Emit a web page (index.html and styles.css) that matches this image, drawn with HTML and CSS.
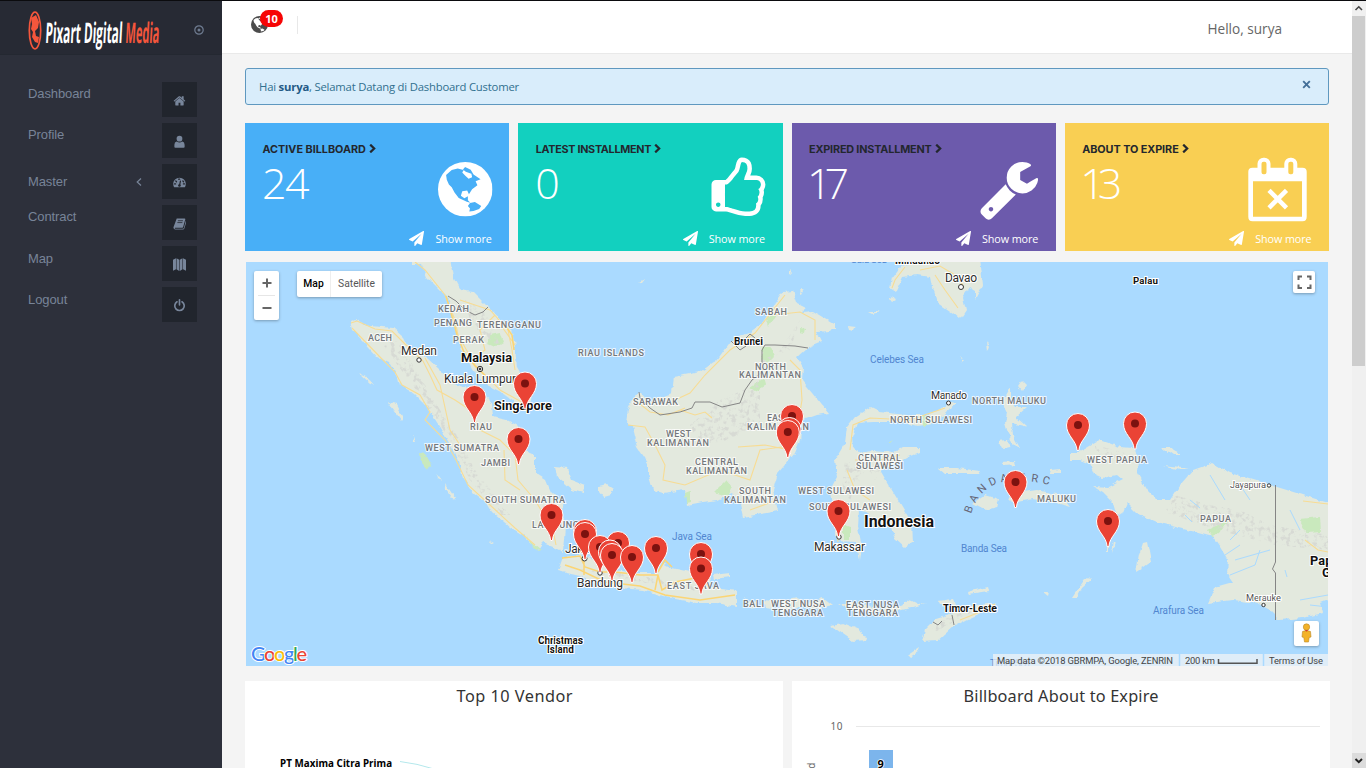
FILE: index.html
```html
<!DOCTYPE html>
<html lang="en">
<head>
<meta charset="utf-8">
<title>Pixart Digital Media</title>
<link rel="stylesheet" href="styles.css">
</head>
<body>
<svg class="defs" width="0" height="0">
  <defs>
    <symbol id="plane" viewBox="0 0 1792 1792"><path d="M1764 11q33 24 27 64l-256 1536q-5 29-32 45-14 8-31 8-11 0-24-5l-453-185-242 295q-18 23-49 23-13 0-22-4-19-7-30.500-23.500t-11.500-36.500v-349l864-1059-1069 925-395-162q-37-14-40-55-2-40 32-59l1664-960q15-9 32-9 20 0 36 11z"/></symbol>
    <symbol id="chev" viewBox="0 0 7 9"><path d="M1.200 .6 5.200 4.500 1.200 8.400" fill="none" stroke="currentColor" stroke-width="2.200"/></symbol>
    <g id="pin"><g transform="translate(13 13)">
      <path d="M-.9 25.500C-1.500 15-11.500 11-11.500 0a11.500 11.500 0 0 1 23 0C11.500 11 1.500 15 .9 25.500z" fill="#ea4335" stroke="#fff" stroke-width="1"/>
      <circle r="4" fill="#7b120f"/></g>
    </g>
    <symbol id="globe" viewBox="563 321 155 162" preserveAspectRatio="none">
      <ellipse cx="640.500" cy="402" rx="77.500" ry="81"/>
      <path class="sea" d="M588 374 586 360 602 345 619 340 636 345 632 352 640 361 650 371 660 366 658 356 642 350 634 343 640 336 656 344 664 358 684 372 670 378 675 390 660 402 651 417 646 406 632 408 628 421 638 429 648 423 648 435 655 442 645 439 622 428 610 412 602 396 594 388zM654 443 668 440 686 452 680 461 664 467 652 468 654 459 648 452z"/>
    </symbol>
  </defs>
</svg>
<div class="app">
  <aside class="sidebar">
    <div class="brand">
      <svg class="logo" width="140" height="44" viewBox="25 6 140 44">
        <ellipse cx="35" cy="29.500" rx="5.700" ry="18.300" fill="none" stroke="#f4563c" stroke-width="1.700"/>
        <path d="M31 17 36 14 39 21 38 27 35 30 36 35 39 36 38 42 35 41 32 36 33 31 31 28 32 23z" fill="#f4563c"/>
        <g transform="translate(45 41.500) skewX(-3)">
          <text class="logo-text" textLength="77" lengthAdjust="spacingAndGlyphs" fill="#fff">Pixart Digital</text>
          <text class="logo-text" x="80" textLength="34" lengthAdjust="spacingAndGlyphs" fill="#f4563c">Media</text>
        </g>
      </svg>
      <svg width="12" height="12" viewBox="0 0 12 12"><circle cx="6" cy="6" r="4.200" fill="none" stroke="#6f7c91" stroke-width="1.200"/><circle cx="6" cy="6" r="1.500" fill="#6f7c91"/></svg>
    </div>
    <ul class="menu">
      <li><span>Dashboard</span><i><svg viewBox="0 0 1792 1792"><path d="M1408 992v480q0 64-64 64h-384v-384h-256v384h-384q-64 0-64-64v-480l576-480zM1631 923l-83 85h-24l-692-577-692 577h-24l-83-85 4-45 719-599q76-50 152 0l244 204v-227h256v440l219 182z" transform="translate(60 40)"/></svg></i></li>
      <li><span>Profile</span><i><svg viewBox="0 0 14 14"><circle cx="7" cy="4" r="3.100"/><path d="M1.500 13V10.500q0-3 2.500-3.500Q7 9 10 7q2.500.5 2.500 3.500V13q0 .8-1 .8h-9q-1 0-1-.8z"/></svg></i></li>
      <li class="open"><span>Master</span><svg class="arrow" viewBox="0 0 6 8"><path d="M5 .5 1.200 4 5 7.500" fill="none" stroke="#788498" stroke-width="1.200"/></svg><i><svg viewBox="0 0 14 14"><path d="M.2 8.200a6.800 6.300 0 0 1 13.600 0q0 2.500-1.100 4H1.300Q.2 10.700.2 8.200z"/><path d="M7 10.500 8 5.500M3 5.400l.8.800M10.600 5.400l.8.800M1.600 8.500h1.200M11.200 8.500h1.200M6 3.400h1.200" stroke="#21252d" stroke-width="1.300" stroke-linecap="round"/><circle cx="6.900" cy="10.300" r="1.400" fill="#21252d"/></svg></i></li>
      <li><span>Contract</span><i><svg viewBox="0 0 14 14"><path d="M4 1.500h8.500q1 .2.700 1.200l-2.300 8q-.3 1-1.500 1H2.200q-.7.800.3 1h8.200q.8 0 1-.8l2.200-8q.7.500.4 1.400l-2.100 7.200q-.4 1-1.400 1H2.200Q.3 13 .5 11z"/><path d="M5.300 4h5.400M4.700 6h5.400" stroke="#21252d" stroke-width=".8"/></svg></i></li>
      <li><span>Map</span><i><svg viewBox="0 0 14 14"><path d="M0 2 3.200.3v11.900L0 13.800zM3.800.3 6.700 2v11.900l-2.900-1.700zM7.300 2l2.900-1.700v11.900l-2.900 1.700zM10.800.3 14 1.800v12l-3.200-1.600z"/></svg></i></li>
      <li><span>Logout</span><i><svg viewBox="0 0 14 14"><path d="M4.300 3a5.100 5.100 0 1 0 5.400 0M7 .9v5.400" fill="none" stroke="#78869b" stroke-width="1.800" stroke-linecap="round"/></svg></i></li>
    </ul>
  </aside>

  <main class="page">
    <header class="topbar">
      <div class="notify">
        <svg width="17" height="17"><use href="#globe"/></svg>
        <span class="badge">10</span>
      </div>
      <div class="hello">Hello, surya</div>
    </header>
    <div class="content">
      <div class="alert"><p>Hai <b>surya</b>, Selamat Datang di Dashboard Customer</p>
        <svg width="9" height="9" viewBox="0 0 9 9"><path d="M1.200 1.200 7.800 7.800M7.800 1.200 1.200 7.800" stroke="#436f98" stroke-width="1.900"/></svg></div>
      <section class="cards">
        <article class="card blue">
          <h3>ACTIVE BILLBOARD <svg><use href="#chev"/></svg></h3>
          <div class="value">24</div>
          <svg class="big" viewBox="0 0 60 66"><use href="#globe" x="2" y="6" width="54.500" height="54.500"/></svg>
          <a><svg><use href="#plane"/></svg>Show more</a>
        </article>
        <article class="card teal">
          <h3 class="w2">LATEST INSTALLMENT <svg><use href="#chev"/></svg></h3>
          <div class="value">0</div>
          <svg class="big" viewBox="0 0 60 66"><path transform="translate(-3 1.500) scale(.0351)" d="M384 1344q0-26-19-45t-45-19-45 19-19 45 19 45 45 19 45-19 19-45zm1152-576q0-51-39-89.500t-89-38.500h-352q0-58 48-159.500t48-160.500q0-98-32-145t-128-47q-26 26-38 85t-30.500 125.500-59.500 109.500q-22 23-77 91-4 5-23 30t-31.500 41-34.500 42.500-40 44-38.500 35.500-40 27-35.500 9h-32v640h32q13 0 31.500 3t33 6.500 38 11 35 11.500 35.500 12.500 29 10.500q211 73 342 73h121q192 0 192-167 0-26-5-56 30-16 47.500-52.500t17.500-73.500-18-69q53-50 53-119 0-25-10-55.500t-25-47.500q32-1 53.500-47t21.500-81zm128-1q0 89-49 163 9 33 9 69 0 77-38 144 3 21 3 43 0 101-60 178 1 139-85 219.500t-227 80.500h-129q-96 0-189.500-22.500t-216.500-65.500q-116-40-138-40h-288q-53 0-90.500-37.500t-37.500-90.500v-640q0-53 37.500-90.500t90.500-37.500h274q36-24 137-155 58-75 107-128 24-25 35.500-85.500t30.500-126.500 62-108q39-37 90-37 84 0 151 32.500t102 101.500 35 186q0 93-48 192h176q104 0 180 76t76 179z"/></svg>
          <a><svg><use href="#plane"/></svg>Show more</a>
        </article>
        <article class="card violet">
          <h3 class="w3">EXPIRED INSTALLMENT <svg><use href="#chev"/></svg></h3>
          <div class="value narrow">17</div>
          <svg class="big" viewBox="0 0 60 66"><path transform="translate(-5.500 1.500) scale(.0351)" d="M448 1472q0-26-19-45t-45-19-45 19-19 45 19 45 45 19 45-19 19-45zm644-420l-682 682q-37 37-90 37-52 0-91-37l-106-108q-38-36-38-90 0-53 38-91l681-681q39 98 114.500 173.500t173.500 114.500zm634-435q0 39-23 106-47 134-164.500 217.500t-258.500 83.500q-185 0-316.500-131.500t-131.500-316.500 131.500-316.500 316.500-131.500q58 0 121.500 16.500t107.500 46.500q16 11 16 28t-16 28l-293 169v224l193 107q5-3 79-48.500t135.500-81 70.500-35.500q15 0 23.500 10t8.500 25z"/></svg>
          <a><svg><use href="#plane"/></svg>Show more</a>
        </article>
        <article class="card yellow">
          <h3 class="w4">ABOUT TO EXPIRE <svg><use href="#chev"/></svg></h3>
          <div class="value narrow">13</div>
          <svg class="big" viewBox="0 0 60 66"><g transform="translate(-6.500 .8)"><path fill-rule="evenodd" d="M3 11h50q4.200 0 4.200 4v45q0 4.500-4.200 4.500H3q-4.200 0-4.200-4.500V15q0-4 4.200-4zM3.500 24.500v35.500h49V24.500z"/><rect x="10" y="3" width="9" height="16.500" rx="4" fill="#f9cf53" stroke="#fff" stroke-width="4"/><rect x="36.800" y="3" width="9" height="16.500" rx="4" fill="#f9cf53" stroke="#fff" stroke-width="4"/><path d="M19.500 33.500 37 51M37 33.500 19.500 51" stroke="#fff" stroke-width="4.500"/></g></svg>
          <a><svg><use href="#plane"/></svg>Show more</a>
        </article>
      </section>

      <section class="map">
        <svg width="1082" height="404" viewBox="246 262 1082 404">
          <defs>
            <filter id="coast" x="-5%" y="-5%" width="110%" height="110%"><feTurbulence type="fractalNoise" baseFrequency=".13" numOctaves="3" seed="4" result="n"/><feDisplacementMap in="SourceGraphic" in2="n" scale="5" xChannelSelector="R" yChannelSelector="G"/></filter>
            <filter id="relief" x="0" y="0" width="100%" height="100%"><feTurbulence type="fractalNoise" baseFrequency=".22" numOctaves="3" seed="9"/><feColorMatrix values="0 0 0 0 .68  0 0 0 0 .7  0 0 0 0 .66  0 0 0 5 -2.500"/><feComposite in2="SourceGraphic" operator="in"/></filter>
          </defs>
          <rect x="246" y="262" width="1082" height="404" fill="#aadaff"/>
          <g filter="url(#coast)">
          <path id="land" fill="#e3e9de" d="M350 321 355 319 368 326 383 327 393 328 403 337 407 345 427 358 440 370 453 384 467 388 483 397 492 403 493 417 507 420 520 427 520 447 527 452 535 455 535 473 546 480 551 492 563 503 565 527 563 552 553 547 543 543 538 550 523 535 510 527 493 513 487 503 473 492 463 477 458 462 453 450 440 427 427 407 413 393 400 385 398 377 390 363 377 357 362 340 352 330z
          M411 258 411 265 422 265 427 277 440 290 448 297 453 317 457 333 462 350 473 370 487 385 503 393 517 403 530 407 532 393 517 367 515 347 512 332 500 320 488 307 473 292 460 290 453 277 450 258z
          M635 395 640 393 648 402 672 393 674 377 700 372 717 360 730 342 750 332 763 323 773 307 783 292 793 291 797 303 805 307 802 313 813 312 835 325 830 331 817 332 822 342 807 348 797 357 803 367 802 380 813 393 829 413 817 415 803 420 800 440 795 453 778 473 773 490 778 511 743 517 740 503 732 493 717 500 703 502 687 505 685 490 663 493 653 490 648 473 648 463 637 447 632 427 626 423 628 410z
          M558 571 563 557 580 555 597 560 613 570 637 573 658 573 663 563 672 568 690 572 710 575 712 587 737 590 737 607 717 603 697 603 670 598 643 590 610 587 580 576z M713 575 730 573 730 577 714 579z M743 598 757 602 753 609 748 604z M763 600 773 601 773 609 765 608z M778 602 797 598 810 603 823 598 832 605 813 609 800 606 783 611z
          M830 625 843 623 860 630 867 640 853 641 840 632z M838 603 860 603 880 609 900 606 910 599 920 604 927 603 910 608 890 613 850 609z M938 601 953 599 955 604 940 605z M968 592 987 587 988 591 969 594z
          M997 603 977 605 953 613 937 618 925 630 922 642 937 641 953 627 970 618 993 608z M908 655 920 647 918 652 910 657z
          M955 403 947 413 933 424 917 426 903 422 873 422 857 423 852 437 853 447 863 453 873 450 893 452 903 447 920 447 920 452 908 457 890 467 880 470 890 487 898 500 912 523 913 542 905 547 895 538 890 525 872 523 868 512 859 509 858 527 862 547 860 560 856 542 837 541 835 523 833 503 830 490 837 477 835 460 845 443 847 427 855 417 870 407 880 412 907 415 927 415 943 407 950 402z
          M1010 388 1002 403 1007 413 1005 423 1010 440 1020 450 1013 437 1012 423 1027 427 1016 417 1027 407 1015 407 1010 400z M1018 386 1022 380 1026 384 1022 391z M998 441 1008 440 1012 448 1002 449z M1001 462 1015 461 1016 465 1003 466z M938 468 957 468 980 471 978 474 945 474z M973 503 985 495 999 499 997 507 986 510z M1008 499 1023 492 1037 490 1060 495 1070 507 1053 502 1033 499 1012 503z M1050 470 1060 469 1060 473 1049 473z
          M890 288 892 278 900 267 913 262 905 258 980 258 983 285 975 300 975 290 970 287 963 297 966 310 960 319 953 313 937 302 932 287 930 277 917 275 903 277 896 292z M888 299 893 296 896 300 891 303z M868 311 880 311 872 313z
          M1085 449 1100 440 1120 447 1133 448 1138 460 1137 473 1147 490 1157 500 1170 500 1180 485 1193 470 1213 463 1230 473 1277 487 1303 495 1332 504 1332 598 1320 603 1323 613 1303 618 1280 620 1270 610 1257 603 1233 600 1208 603 1215 587 1233 582 1227 573 1228 560 1220 547 1213 537 1187 530 1157 522 1137 513 1127 503 1123 513 1117 517 1113 503 1103 493 1093 487 1107 488 1123 480 1117 475 1103 478 1094 474 1090 464 1080 460 1070 460 1070 452 1079 452z
          M1143 543 1147 542 1151 562 1144 567 1136 572 1139 555z M1162 447 1170 447 1182 455 1173 455z M1163 465 1190 468 1180 470z M1085 578 1092 579 1082 588 1077 597 1072 597 1078 588z M1107 545 1109 545 1109 552 1107 552z M1114 541 1116 543 1112 553z M555 467 567 468 572 480 585 485 583 493 572 490 557 477z M599 486 607 484 613 488 610 495 603 497 599 492z M388 403 396 405 403 418 401 421z M359 374 366 377 375 385 370 384z M413 434 416 442 414 442z M445 483 455 498 454 500 446 489z M437 474 441 480 438 478z M638 282 645 279 641 284z M847 325 855 326 853 330 848 329z M961 356 965 361 963 363z M986 341 989 346 987 351z M827 323 835 324 835 329 828 329z M790 268 792 275 790 274z M800 289 803 291 801 295z M1069 436 1078 437 1074 442z M488 541 494 544 491 544z M1043 592 1049 592 1048 596z"/>
          <path fill="#c9e9bd" d="M419 452 425 453 432 466 427 468 420 459zM490 335 500 333 503 342 495 347 488 344zM766 320 773 312 776 315 768 327zM763 347 770 347 774 356 768 362 761 360zM749 388 764 378 766 385 755 391zM726 480 732 487 728 497 714 492zM685 492 690 490 690 502 686 503zM922 415 927 415 926 426 923 426zM844 525 850 527 850 540 844 540zM1207 530 1218 525 1228 520 1218 534 1211 537zM1300 519 1320 517 1321 532 1307 533zM526 536 533 543 541 550 535 549zM800 328 806 329 805 334 800 333zM888 443 893 440 890 443z"/>
          </g>
          <g class="relief" filter="url(#relief)">
            <path d="M375 332 400 343 410 360 425 385 440 410 460 440 475 470 510 515 500 515 470 480 450 440 420 395 390 355zM465 300 485 310 500 345 485 340 470 320zM760 360 790 350 800 320 780 350 755 385 720 400 690 425 700 445 730 440 760 425zM1175 495 1210 505 1240 510 1270 525 1328 535 1328 550 1275 545 1210 528 1165 512zM845 460 865 470 850 500 842 490zM570 568 630 580 700 593 690 585 620 572zM930 625 975 607 970 613 935 632zM862 455 880 470 875 480 862 462zM1095 445 1125 453 1110 460 1095 454z"/>
          </g>
          <g class="roads">
            <path d="M351 323 357 321 375 329 392 331 405 344 423 361 430 375 437 390 455 400 470 410 480 430 500 440 515 455 518 480 535 500 553 530 556 545M352 328 380 357 395 372 402 385 420 395 430 412 425 420 445 440 456 460 468 485 490 505 515 528 535 545M415 262 425 270 445 295 455 320 458 335 475 365 500 390 527 405M460 300 490 310 508 330 512 350 515 370M470 360 485 350 480 330 495 315M504 450 505 480 520 490M425 358 440 385 450 430 460 445M497 320 515 345"/>
            <path d="M635 400 650 412 668 415 685 408M675 400 690 393 705 375 730 350 755 333 785 295M790 360 800 370 802 400 797 430 790 455M628 425 645 427 655 445 665 465 663 480 685 485 720 470 750 480 760 450 795 445M680 410 695 415 705 412 712 418M738 447 765 445 790 450M773 315 800 312 815 320 815 340M750 510 777 500"/>
            <path class="main" d="M446 296 453 320 457 335 464 352 475 366 490 380M503 322 512 335 514 350M562 558 580 556 585 567 600 572 615 572 640 575 658 575 662 590 675 582 700 577 710 588M565 565 580 570 605 582 640 586 665 595 700 600 735 595M658 572 665 560 672 567M658 575 655 590M584 555 584 575"/>
            <path d="M838 542 836 520 838 505M850 450 853 425 870 418 910 420 945 408M855 460 880 460 900 455M847 470 855 490 870 500M935 275 945 290 958 308M905 267 895 280 892 288M920 270 940 266 955 275 963 285M960 620 980 612 995 604M1303 501 1328 504M1305 540 1318 550 1328 552"/>
          </g>
          <g class="rivers"><path d="M1190 500 1200 508M1185 515 1192 522M1225 555 1240 545M1230 575 1255 565 1260 550M1235 560 1270 550M1230 540 1240 530M1285 570 1287 577M1300 600 1328 595M1310 605 1328 607M1210 475 1225 500M1240 485 1250 500M1290 510 1300 530"/></g>
          <g class="borders"><path d="M448 296 456 301 465 310 475 315 483 312 488 307M639 392 640 398 650 408 660 415 680 412 692 408 695 402 710 402 722 407 740 403 745 390 752 380 762 372 762 360 762 350 765 345 775 345 795 346 808 348M731 341 740 350 746 346M746 338 750 334 755 338M1275.500 485V562L1272.500 569 1275.500 573V620M933 622 938 625 942 621M952 615 954 625"/></g>

          <g class="region">
            <text x="438" y="312" textLength="31">KEDAH</text><text x="434" y="326" textLength="38">PENANG</text><text x="477" y="328" textLength="64">TERENGGANU</text><text x="453" y="343" textLength="31">PERAK</text><text x="368" y="341" textLength="24">ACEH</text>
            <text x="578" y="356" textLength="66">RIAU ISLANDS</text><text x="755" y="315" textLength="32">SABAH</text><text x="755" y="370" textLength="31">NORTH</text><text x="739" y="378" textLength="62">KALIMANTAN</text><text x="633" y="405" textLength="45">SARAWAK</text>
            <text x="767" y="421" textLength="22">EAST</text><text x="747" y="430" textLength="62">KALIMANTAN</text><text x="666" y="437" textLength="25">WEST</text><text x="647" y="446" textLength="62">KALIMANTAN</text><text x="695" y="465" textLength="43">CENTRAL</text><text x="686" y="474" textLength="61">KALIMANTAN</text><text x="739" y="494" textLength="32">SOUTH</text><text x="724" y="503" textLength="62">KALIMANTAN</text>
            <text x="470" y="430" textLength="22">RIAU</text><text x="425" y="451" textLength="74">WEST SUMATRA</text><text x="481" y="466" textLength="29">JAMBI</text><text x="485" y="503" textLength="80">SOUTH SUMATRA</text><text x="532" y="528" textLength="47">LAMPUNG</text>
            <text x="890" y="423" textLength="82">NORTH SULAWESI</text><text x="972" y="404" textLength="74">NORTH MALUKU</text><text x="858" y="461" textLength="43">CENTRAL</text><text x="856" y="469" textLength="47">SULAWESI</text><text x="798" y="494" textLength="76">WEST SULAWESI</text><text x="809" y="510" textLength="82">SOUTH SULAWESI</text>
            <text x="1037" y="501.500" textLength="39">MALUKU</text><text x="1087" y="463" textLength="60">WEST PAPUA</text><text x="1200" y="522" textLength="31">PAPUA</text><text x="667" y="589" textLength="52">EAST JAVA</text><text x="743" y="607" textLength="21">BALI</text><text x="771" y="607" textLength="54">WEST NUSA</text><text x="772" y="616" textLength="51">TENGGARA</text><text x="846" y="608" textLength="53">EAST NUSA</text><text x="847" y="616" textLength="51">TENGGARA</text>
          </g>
          <path id="arc" d="M971 514Q981 482 1011 481Q1035 480 1056 487" fill="none"/>
          <text class="arc"><textPath href="#arc" textLength="94">BANDA ARC</textPath></text>
          <g class="sea-name">
            <text x="851" y="263" textLength="36">Sulu Sea</text><text x="870" y="363" textLength="54">Celebes Sea</text><text x="672" y="539.500" textLength="40">Java Sea</text><text x="961" y="552" textLength="46">Banda Sea</text><text x="1153" y="614" textLength="51">Arafura Sea</text><text x="990" y="667" textLength="40">Timor Sea</text>
          </g>
          <g class="dot"><circle cx="419" cy="360" r="2.200"/><circle cx="480" cy="369" r="2.700"/><circle class="solid" cx="480" cy="369" r="1"/><circle cx="961" cy="287" r="2.500"/><circle cx="948.500" cy="403" r="2"/><circle cx="584.500" cy="558.500" r="2.500"/><circle cx="600" cy="573" r="2.200"/><circle cx="839" cy="537" r="2.200"/><circle cx="1269" cy="485.500" r="1.700"/><circle cx="1263.500" cy="605" r="1.700"/></g>
          <g class="city">
            <text x="401" y="355" textLength="36">Medan</text><text x="444" y="383" textLength="72">Kuala Lumpur</text><text x="945" y="281.500" textLength="32">Davao</text><text x="931" y="398.500" textLength="36" font-size="10.500">Manado</text><text x="565" y="553" textLength="38">Jakarta</text><text x="577" y="586.500" textLength="46">Bandung</text><text x="814" y="550.500" textLength="51">Makassar</text><text x="1230" y="488" textLength="36" font-size="9.300" fill="#555">Jayapura</text><text x="1246" y="601" textLength="35" font-size="9.300" fill="#555">Merauke</text>
          </g>
          <g class="country">
            <text x="461" y="362" textLength="51">Malaysia</text><text x="494" y="410" textLength="58">Singapore</text><text x="734" y="345" textLength="29" font-size="10.300">Brunei</text><text x="895" y="264" textLength="45" font-size="10.300">Mindanao</text><text x="1133" y="283.500" textLength="25" font-size="9.800">Palau</text><text x="864" y="527" textLength="70" font-size="16">Indonesia</text><text x="943" y="612" textLength="54" font-size="10.500">Timor-Leste</text><text x="538" y="644" textLength="45" font-size="10.300">Christmas</text><text x="547" y="653" textLength="27" font-size="10">Island</text><text x="1310" y="565" textLength="66">Papua New</text><text x="1322" y="577" textLength="40">Guinea</text>
          </g>
          <g>
            <use href="#pin" x="461.500" y="384"/><use href="#pin" x="512" y="370.500"/><use href="#pin" x="505.500" y="426"/><use href="#pin" x="538.500" y="502"/><use href="#pin" x="572" y="518"/><use href="#pin" x="572" y="521"/><use href="#pin" x="605" y="530"/><use href="#pin" x="587" y="534"/><use href="#pin" x="597" y="538.500"/><use href="#pin" x="599" y="542"/><use href="#pin" x="619" y="544"/><use href="#pin" x="643" y="535"/><use href="#pin" x="688" y="541"/><use href="#pin" x="688" y="555.500"/><use href="#pin" x="779" y="403"/><use href="#pin" x="776.500" y="416"/><use href="#pin" x="774.800" y="419"/><use href="#pin" x="825.500" y="498"/><use href="#pin" x="1002.500" y="469"/><use href="#pin" x="1065" y="412"/><use href="#pin" x="1122" y="410.500"/><use href="#pin" x="1095" y="508"/>
          </g>
          <text class="google" x="251" y="660.500" textLength="56"><tspan fill="#4285f4">G</tspan><tspan fill="#ea4335">o</tspan><tspan fill="#fbbc05">o</tspan><tspan fill="#4285f4">g</tspan><tspan fill="#34a853">l</tspan><tspan fill="#ea4335">e</tspan></text>
          <g class="credit"><rect x="993" y="654" width="335" height="12"/><path d="M1179.500 654v12M1263.500 654v12" stroke="#aadaff" stroke-width="1.500"/>
            <text x="997" y="664" textLength="176">Map data ©2018 GBRMPA, Google, ZENRIN</text><text x="1185" y="664" textLength="30">200 km</text><path d="M1218.500 659v4.300h38.500v-4.300" fill="none" stroke="#555" stroke-width="1.500"/><text x="1269" y="664" textLength="54">Terms of Use</text></g>
        </svg>
        <div class="zoomctl"><svg width="25" height="49"><path d="M8.500 12h9M13 7.500v9M8.500 37h9" stroke="#666" stroke-width="2"/><path d="M4 24.500h17" stroke="#e6e6e6"/></svg></div>
        <div class="types"><b>Map</b><span>Satellite</span></div>
        <div class="full"><svg width="22" height="22"><path d="M5.500 9V5.500H9M14 5.500h3.500V9M17.500 13.500V17H14M9 17H5.500V13.500" fill="none" stroke="#666" stroke-width="2"/></svg></div>
        <div class="peg"><svg width="25" height="25"><circle cx="12.500" cy="6" r="3.200" fill="#f3b229" stroke="#b98a2c" stroke-width=".6"/><path d="M8.500 10.500q4-2 8 0l.5 5.500-1.800.5-.7 4.500h-4l-.7-4.500L8 16z" fill="#f3b229" stroke="#b98a2c" stroke-width=".6"/><path d="M10.800 9h3.400l-1.700 1.800z" fill="#d23f31"/></svg></div>
      </section>

      <section class="charts">
        <svg class="chart" width="538" height="90" viewBox="245 681 538 90">
          <text class="title" x="456.500" y="701.500" textLength="116">Top 10 Vendor</text>
          <text class="label" x="280" y="766.500" textLength="112">PT Maxima Citra Prima</text>
          <path d="M400 761.500Q417 763.500 434 769" fill="none" stroke="#b4e8ec"/>
        </svg>
        <svg class="chart" width="538" height="90" viewBox="792 681 538 90">
          <text class="title" x="963.500" y="701.500" textLength="195">Billboard About to Expire</text>
          <text class="tick" x="830.500" y="729.500" textLength="12">10</text>
          <path d="M856 726.500h464" stroke="#e8e8e8"/>
          <rect x="869" y="750" width="24" height="22" fill="#7cb5ec"/>
          <text class="bar" x="877.500" y="768">9</text>
          <text class="tick" text-anchor="end" transform="translate(815 762.500) rotate(-90)">Billboard</text>
        </svg>
      </section>
    </div>
  </main>
  <div class="scroll">
    <svg width="14" height="15"><path d="M3.500 9 6.800 5.800 10 9" fill="none" stroke="#444" stroke-width="1.600"/></svg>
    <div class="thumb"></div>
    <svg class="down" width="14" height="15"><path d="M3.500 6 6.800 9.200 10 6" fill="none" stroke="#222" stroke-width="2"/></svg>
  </div>
</div>
</body>
</html>
```
FILE: styles.css
```css
* { box-sizing: border-box; }
body { margin: 0; height: 768px; overflow: hidden; background: #f4f4f4; font-family: "Open Sans", "Noto Sans", sans-serif; }
.defs { position: absolute; }
.app { display: flex; height: 768px; border-top: 1px solid #0b0b0e; overflow: hidden; }
svg { display: block; flex: none; }
.sea { fill: var(--sea, #fff); }

.sidebar { width: 222px; flex: none; background: #2d303b; }
.brand { height: 54px; background: #272a34; display: flex; align-items: center; padding: 4px 17px 0 25px; justify-content: space-between; border-bottom: 1px solid #242831; }
.logo { margin-top: -2px; overflow: visible; }
.logo-text { font: 700 28.5px "Open Sans", sans-serif; }
.menu { list-style: none; margin: 0; padding: 26.5px 25px 0 28px; font: 13px "Liberation Sans", Arial, sans-serif; color: #788498; }
.menu li { display: flex; height: 41.2px; align-items: flex-start; }
.menu li span { flex: 1; line-height: 20px; padding-top: 2.4px; letter-spacing: -.1px; }
.menu li.open span { padding-top: 8px; }
.menu i { width: 35px; height: 35px; background: #21252d; display: flex; align-items: center; justify-content: center; padding-top: 2px; }
.menu i svg { width: 13px; height: 13px; fill: #78869b; }
.menu .arrow { width: 6px; height: 8px; margin: 14px 20px 0 0; }

.page { width: 1130px; flex: none; }
.topbar { height: 53px; background: #fff; border-bottom: 1px solid #e9e9e9; display: flex; justify-content: space-between; padding: 0 70px 0 29px; }
.notify { position: relative; width: 47px; height: 18px; margin-top: 15px; border-right: 1px solid #e8e8e8; fill: #4b4b4b; }
.badge { position: absolute; left: 9px; top: -6px; width: 23px; height: 17px; border-radius: 9px; background: #f60505; color: #fff; font: 700 11px/17px "Open Sans", sans-serif; text-align: center; }
.hello { font-size: 13.6px; line-height: 20px; margin-top: 18px; color: #666; }
.content { padding: 14px 23px 0; }
.alert { height: 37px; border: 1px solid #5f98bf; border-radius: 3px; background: #d9edfb; display: flex; justify-content: space-between; padding: 0 17px 0 13px; font-size: 11.3px; line-height: 35px; color: #31708f; }
.alert p { margin: 0; letter-spacing: -.2px; }
.alert svg { margin-top: 11px; }
.alert b { color: #245a86; }

.cards { display: grid; grid-template-columns: repeat(4, 1fr); gap: 9px; margin-top: 18px; }
.card { position: relative; height: 128px; padding: 19px 17px 0 17.5px; color: #fff; }
.blue { background: #48aff7; --sea: #48aff7; }
.teal { background: #12d0bf; }
.violet { background: #6c5aac; }
.yellow { background: #f9cf53; }
.card h3 { display: flex; gap: 4px; margin: 0; font: 700 10.8px/15px Inter, sans-serif; color: #23272e; }
.card h3.w2 { letter-spacing: -.3px; }
.card h3.w3 { letter-spacing: -.15px; }
.card h3.w4 { letter-spacing: -.05px; }
.card h3 svg { width: 7px; height: 9px; margin-top: 2px; margin-left: -1px; }
.card .value { font: 300 43px/56px "Open Sans", sans-serif; letter-spacing: -1.5px; margin: -2px 0 0 -.5px; }
.card .narrow { letter-spacing: -7px; margin-left: -2px; }
.big { position: absolute; right: 13px; top: 33px; width: 60px; height: 66px; fill: #fff; overflow: visible; }
.card a { position: absolute; right: 17.5px; bottom: 4px; display: flex; gap: 11px; align-items: center; font-size: 10.8px; line-height: 16px; letter-spacing: -.1px; }
.card a svg { width: 15px; height: 15px; fill: #fff; margin-top: -2px; }

.map { position: relative; margin: 11px 1px 0; height: 404px; overflow: hidden; font-family: Roboto, sans-serif; }
.map text { font-family: Roboto, sans-serif; }
.roads { fill: none; stroke: #f7dc94; stroke-width: 1.1; }
.roads .main { stroke: #fbd575; stroke-width: 1.5; }
.rivers { fill: none; stroke: #aadaff; stroke-width: 1; }
.borders { fill: none; stroke: #858585; stroke-width: 1; }
.region text { font-size: 9.1px; font-weight: 500; fill: #74777b; stroke: #fff; stroke-opacity: .75; stroke-width: 2px; paint-order: stroke; }
.arc { font-size: 11px; fill: #667; }
.sea-name text { font-size: 10px; fill: #5186d0; }
.dot { fill: #fff; stroke: #333; stroke-width: 1; }
.dot .solid { fill: #222; }
.city { font-size: 12px; fill: #2d2d2d; stroke: #fff; stroke-width: 2px; paint-order: stroke; }
.country { font-size: 12.8px; font-weight: 700; fill: #111; stroke: #fff; stroke-width: 2px; paint-order: stroke; }
.map .google { font: 500 20px Lato, sans-serif; stroke: #fff; stroke-width: 2px; paint-order: stroke; }
.credit rect { fill: #f5f5f5; opacity: .7; }
.credit text { font-size: 9.4px; fill: #444; }
.zoomctl, .types, .full, .peg { position: absolute; background: #fff; border-radius: 2px; box-shadow: 0 1px 3px rgba(0,0,0,.3); }
.zoomctl { left: 8px; top: 9px; width: 25px; height: 49px; }
.types { left: 51px; top: 9px; width: 85px; height: 26px; display: flex; font-size: 10.3px; line-height: 26px; color: #565656; }
.types b { width: 34px; text-align: center; color: #000; font-weight: 500; border-right: 1px solid #eee; }
.types span { flex: 1; text-align: center; }
.full { right: 13px; top: 9px; width: 22px; height: 22px; }
.peg { right: 9px; top: 359px; width: 25px; height: 25px; }

.charts { display: flex; gap: 9px; margin: 15px -1px 0 0; }
.chart { background: #fff; font-family: "Noto Sans", "Open Sans", sans-serif; }
.title { font-size: 16.3px; fill: #333; }
.label { font-size: 9.8px; font-weight: 700; fill: #000; }
.tick { font-size: 10px; fill: #666; }
.bar { font: 700 11px "Noto Sans", sans-serif; fill: #000; stroke: #fff; stroke-width: 1.5px; paint-order: stroke; }

.scroll { width: 14px; flex: none; background: #f0f0f0; display: flex; flex-direction: column; }
.thumb { height: 350px; width: 13px; background: #cdcdcd; }
.down { margin-top: auto; background: #dcdcdc; }
```
